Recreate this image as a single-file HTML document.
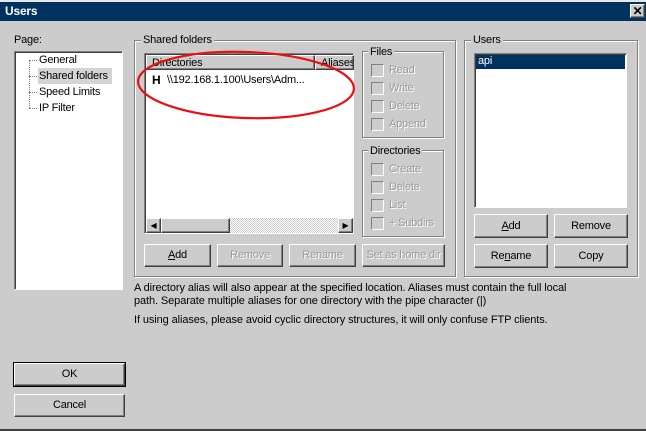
<!DOCTYPE html>
<html><head><style>
body{margin:0;width:646px;height:431px;background:#cccccc;font-family:"Liberation Sans",sans-serif;font-size:11px;color:#000;position:relative;overflow:hidden}
.a{position:absolute}
.t{position:absolute;white-space:nowrap;letter-spacing:-0.2px}
.sunk{position:absolute;background:#fff;border-top:1px solid #808080;border-left:1px solid #808080;border-right:1px solid #fff;border-bottom:1px solid #fff;box-shadow:inset 1px 1px 0 #404040}
.grp{position:absolute;border:1px solid #808080;box-shadow:1px 1px 0 #fff, inset 1px 1px 0 #fff}
.lbl{position:absolute;background:#cccccc;padding:0 2px;white-space:nowrap;letter-spacing:-0.2px}
.btn{position:absolute;background:#cccccc;border-top:1px solid #fff;border-left:1px solid #fff;border-right:1px solid #404040;border-bottom:1px solid #404040;box-shadow:inset -1px -1px 0 #808080;text-align:center;box-sizing:border-box;letter-spacing:-0.2px;line-height:20px}
.dis{color:#999;text-shadow:1px 1px 0 #fff}
.cb{position:absolute;width:11px;height:11px;border-top:1px solid #808080;border-left:1px solid #808080;border-right:1px solid #fff;border-bottom:1px solid #fff}
</style></head><body>
<div class="a" style="left:0;top:0;width:646px;height:2px;background:#e8e8e8"></div>
<div class="a" style="left:0;top:2px;width:646px;height:19px;background:#00325f"></div>
<div class="t" style="left:5px;top:4px;color:#fff;font-weight:bold;font-size:12px">Users</div>
<div class="btn" style="left:630px;top:4px;width:15px;height:14px;line-height:12px;font-size:12px;font-weight:bold">✕</div>

<div class="t" style="left:14px;top:34px">Page:</div>
<div class="sunk" style="left:14px;top:51px;width:107px;height:237px"></div>
<div class="a" style="left:29px;top:60px;height:48px;border-left:1px dotted #808080"></div>
<div class="a" style="left:29px;top:60px;width:8px;border-top:1px dotted #808080"></div>
<div class="a" style="left:29px;top:76px;width:8px;border-top:1px dotted #808080"></div>
<div class="a" style="left:29px;top:92px;width:8px;border-top:1px dotted #808080"></div>
<div class="a" style="left:29px;top:108px;width:8px;border-top:1px dotted #808080"></div>
<div class="t" style="left:39px;top:54px">General</div>
<div class="a" style="left:38px;top:68px;width:74px;height:16px;background:#d4d4d4"></div>
<div class="t" style="left:39px;top:70px">Shared folders</div>
<div class="t" style="left:39px;top:86px">Speed Limits</div>
<div class="t" style="left:39px;top:102px">IP Filter</div>

<div class="grp" style="left:134px;top:40px;width:320px;height:235px"></div>
<div class="lbl" style="left:141px;top:34px">Shared folders</div>
<div class="sunk" style="left:144px;top:53px;width:208px;height:179px"></div>
<div class="btn" style="left:146px;top:55px;width:169px;height:15px;line-height:14px;text-align:left;padding-left:5px">Directories</div>
<div class="btn" style="left:315px;top:55px;width:39px;height:15px;line-height:14px;text-align:left;padding-left:5px;overflow:hidden">Aliases</div>
<div class="t" style="left:152px;top:73px;font-weight:bold;font-size:12px">H</div>
<div class="t" style="left:167px;top:74px">\\192.168.1.100\Users\Adm...</div>
<div class="a" style="left:146px;top:218px;width:208px;height:15px;background:repeating-conic-gradient(#fff 0 25%,#ccc 0 50%) 0 0/2px 2px"></div>
<div class="btn" style="left:146px;top:218px;width:15px;height:15px;line-height:13px;font-size:8px">◀</div>
<div class="btn" style="left:161px;top:218px;width:69px;height:15px"></div>
<div class="btn" style="left:338px;top:218px;width:15px;height:15px;line-height:13px;font-size:8px">▶</div>

<div class="grp" style="left:362px;top:51px;width:80px;height:85px"></div>
<div class="lbl" style="left:368px;top:46px">Files</div>
<div class="cb" style="left:371px;top:64px"></div><div class="t dis" style="left:389px;top:64px">Read</div>
<div class="cb" style="left:371px;top:82px"></div><div class="t dis" style="left:389px;top:82px">Write</div>
<div class="cb" style="left:371px;top:100px"></div><div class="t dis" style="left:389px;top:100px">Delete</div>
<div class="cb" style="left:371px;top:118px"></div><div class="t dis" style="left:389px;top:118px">Append</div>

<div class="grp" style="left:362px;top:150px;width:80px;height:85px"></div>
<div class="lbl" style="left:368px;top:145px">Directories</div>
<div class="cb" style="left:371px;top:163px"></div><div class="t dis" style="left:389px;top:163px">Create</div>
<div class="cb" style="left:371px;top:181px"></div><div class="t dis" style="left:389px;top:181px">Delete</div>
<div class="cb" style="left:371px;top:199px"></div><div class="t dis" style="left:389px;top:199px">List</div>
<div class="cb" style="left:371px;top:217px"></div><div class="t dis" style="left:389px;top:217px">+ Subdirs</div>

<div class="btn" style="left:144px;top:244px;width:67px;height:23px"><u>A</u>dd</div>
<div class="btn dis" style="left:217px;top:244px;width:66px;height:23px">Remove</div>
<div class="btn dis" style="left:289px;top:244px;width:67px;height:23px">Rename</div>
<div class="btn dis" style="left:362px;top:244px;width:83px;height:23px">Set as home dir</div>

<div class="grp" style="left:464px;top:40px;width:172px;height:235px"></div>
<div class="lbl" style="left:471px;top:34px">Users</div>
<div class="sunk" style="left:474px;top:53px;width:151px;height:153px"></div>
<div class="a" style="left:476px;top:55px;width:149px;height:14px;background:#00325f"></div>
<div class="t" style="left:478px;top:55px;color:#fff">api</div>
<div class="btn" style="left:474px;top:214px;width:74px;height:24px;line-height:22px"><u>A</u>dd</div>
<div class="btn" style="left:554px;top:214px;width:74px;height:24px;line-height:22px">Remove</div>
<div class="btn" style="left:474px;top:244px;width:74px;height:24px;line-height:22px">Re<u>n</u>ame</div>
<div class="btn" style="left:554px;top:244px;width:74px;height:24px;line-height:22px">Copy</div>

<div class="t" style="left:134px;top:282px;letter-spacing:-0.1px">A directory alias will also appear at the specified location. Aliases must contain the full local</div>
<div class="t" style="left:134px;top:295px;letter-spacing:-0.1px">path. Separate multiple aliases for one directory with the pipe character (|)</div>
<div class="t" style="left:134px;top:314px;letter-spacing:-0.1px">If using aliases, please avoid cyclic directory structures, it will only confuse FTP clients.</div>

<div class="btn" style="left:14px;top:363px;width:111px;height:23px;outline:1px solid #000">OK</div>
<div class="btn" style="left:14px;top:394px;width:111px;height:23px">Cancel</div>

<div class="a" style="left:0;top:429px;width:646px;height:2px;background:#404040"></div>
<svg class="a" style="left:0;top:0" width="646" height="431"><ellipse cx="246" cy="85" rx="108" ry="33" fill="none" stroke="#e81010" stroke-width="2.2" transform="rotate(2 246 85)"/></svg>
</body></html>
